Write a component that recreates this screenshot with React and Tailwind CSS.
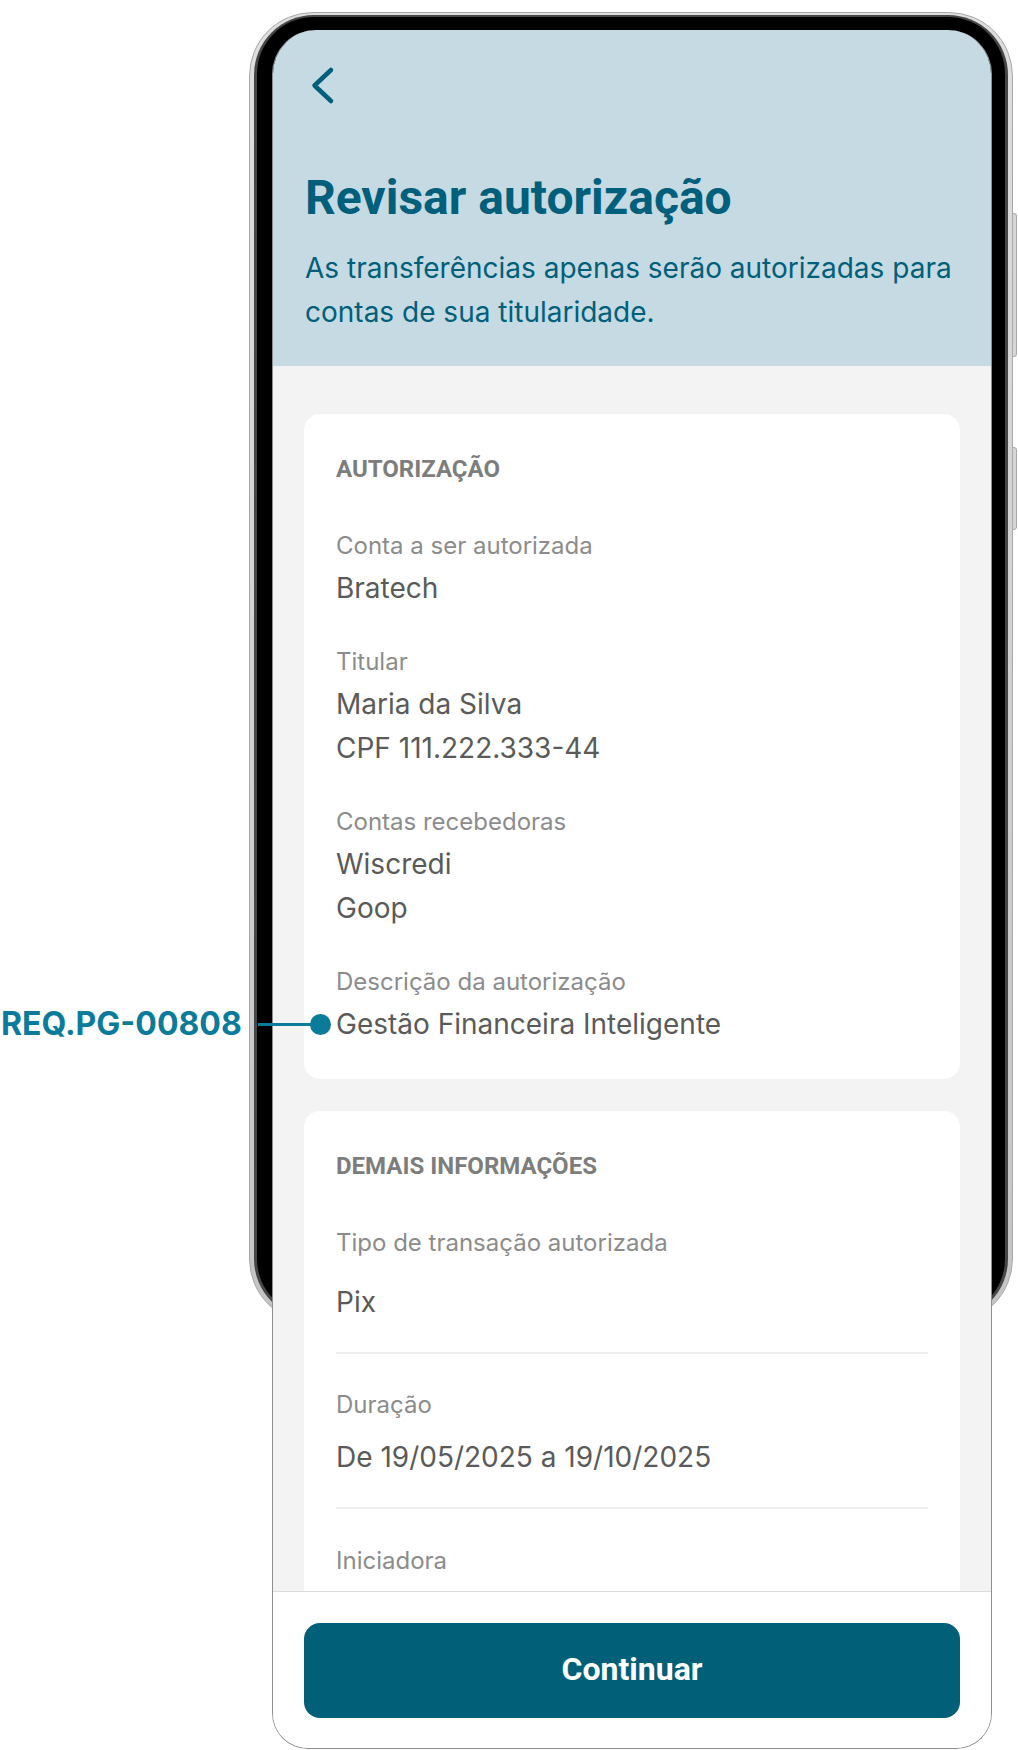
import React from 'react';

const roboto = { fontFamily: 'Roboto, "Liberation Sans", sans-serif' };

const Field = ({ label, values }) => (
  <div>
    <div className="text-[24px] leading-[30px] text-[#8c8c8c]">{label}</div>
    <div className="mt-[5px] text-[28px] leading-[44px] text-[#5a5a5a]">
      {values.map((v) => (
        <div key={v}>{v}</div>
      ))}
    </div>
  </div>
);

const SectionTitle = ({ children, className = '' }) => (
  <div
    className={`text-[24px] font-bold uppercase leading-[28px] text-[#7d7d7d] ${className}`}
    style={roboto}
  >
    {children}
  </div>
);

export default function App() {
  return (
    <div
      className="relative h-[1750px] w-[1018px] overflow-hidden bg-white pt-[30px]"
      style={{ fontFamily: 'Inter, "Noto Sans", sans-serif' }}
    >
      {/* phone frame, behind the screen */}
      <div className="absolute left-[249px] top-[12px] h-[1311px] w-[764px] rounded-[64px] border border-[#a8a8a8] bg-gradient-to-b from-[#dedede] to-[#c4c4c4] px-[4px] pb-[3px] pt-[2px]">
        <div className="h-full w-full rounded-[60px] bg-[#464646] px-[3px] pb-[3px] pt-[2px]">
          <div className="h-full w-full rounded-[57px] bg-black" />
        </div>
      </div>
      <div className="absolute left-[1012px] top-[213px] h-[144px] w-[5px] rounded-r-[3px] border border-[#a9a9a9] bg-[#d6d6d6]" />
      <div className="absolute left-[1012px] top-[447px] h-[83px] w-[5px] rounded-r-[3px] border border-[#a9a9a9] bg-[#d6d6d6]" />

      {/* screen */}
      <div className="relative ml-[272px] flex h-[1719px] w-[720px] flex-col overflow-hidden rounded-t-[44px] rounded-b-[36px] border-x border-b border-[#8e8e8e]">
        <div className="h-[336px] shrink-0 bg-[#c5dae3] px-[32px] pt-[30px]">
          <svg width="48" height="48" viewBox="0 0 48 48" fill="none">
            <path
              d="M26 10 L9.5 25.5 L26 41"
              stroke="#005f7a"
              strokeWidth="4.5"
              strokeLinecap="round"
              strokeLinejoin="round"
            />
          </svg>
          <h1
            className="mt-[63px] text-[48px] font-bold leading-[54px] text-[#005f7a]"
            style={roboto}
          >
            Revisar autorização
          </h1>
          <p className="mt-[22px] text-[28px] leading-[43.5px] text-[#005f7a]">
            As transferências apenas serão autorizadas para contas de sua titularidade.
          </p>
        </div>

        <div className="flex-1 overflow-hidden bg-[#f3f3f3] px-[31px] pt-[48px]">
          <div className="rounded-[16px] bg-white px-8 pb-[33px] pt-[41px]">
            <SectionTitle>Autorização</SectionTitle>
            <div className="mt-[48px] flex flex-col gap-[37px]">
              <Field label="Conta a ser autorizada" values={['Bratech']} />
              <Field label="Titular" values={['Maria da Silva', 'CPF 111.222.333-44']} />
              <Field label="Contas recebedoras" values={['Wiscredi', 'Goop']} />
              <Field label="Descrição da autorização" values={['Gestão Financeira Inteligente']} />
            </div>
          </div>

          <div className="mt-[32px] rounded-[16px] bg-white px-8 pt-[41px]">
            <SectionTitle className="mb-[11px]">Demais informações</SectionTitle>
            <div className="border-b-2 border-[#efefef] pb-[28px] pt-[37px]">
              <div className="text-[24px] leading-[30px] text-[#8c8c8c]">Tipo de transação autorizada</div>
              <div className="mt-[22px] text-[28px] leading-[44px] text-[#5a5a5a]">Pix</div>
            </div>
            <div className="border-b-2 border-[#efefef] pb-[28px] pt-[36px]">
              <div className="text-[24px] leading-[30px] text-[#8c8c8c]">Duração</div>
              <div className="mt-[15px] text-[28px] leading-[44px] text-[#5a5a5a]">De 19/05/2025 a 19/10/2025</div>
            </div>
            <div className="pb-[40px] pt-[37px]">
              <div className="text-[24px] leading-[30px] text-[#8c8c8c]">Iniciadora</div>
            </div>
          </div>
        </div>

        <div className="shrink-0 border-t border-[#dcdcdc] bg-white px-[31px] pb-[30px] pt-[31px]">
          <button
            className="h-[95px] w-full rounded-[16px] bg-[#015f78] pb-[3px] text-[32px] font-bold text-white"
            style={roboto}
          >
            Continuar
          </button>
        </div>
      </div>

      {/* requirement annotation */}
      <div className="absolute left-[1px] top-[1003px] flex items-center">
        <span className="text-[32px] font-bold leading-[42px] text-[#0b7b9c]">REQ.PG-00808</span>
      </div>
      <div className="absolute left-[258px] top-[1023px] h-[3px] w-[60px] bg-[#0b7b9c]" />
      <div className="absolute left-[310px] top-[1014px] h-[21px] w-[21px] rounded-full bg-[#0b7b9c]" />
    </div>
  );
}
